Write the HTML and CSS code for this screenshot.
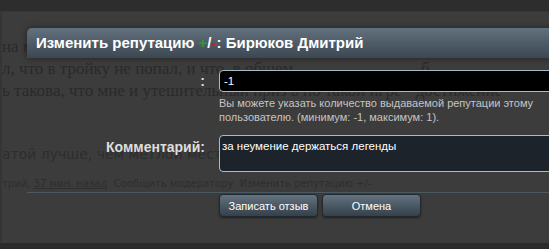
FILE: index.html
```html
<!DOCTYPE html>
<html lang="ru">
<head>
    <meta charset="UTF-8">
    <meta name="viewport" content="width=device-width, initial-scale=1.0">
    <title>Изменить репутацию</title>
    <link rel="stylesheet" href="styles.css">
</head>
<body>
    <div class="topbar"></div>
    <div class="thread">
        <p class="post-text first">на м</p>
        <p class="post-text">л, что в тройку не попал, и что, в общем, &nbsp;&nbsp;&nbsp;&nbsp;&nbsp;&nbsp;&nbsp;&nbsp;&nbsp;&nbsp;&nbsp;&nbsp;&nbsp;&nbsp;&nbsp;&nbsp;&nbsp;&nbsp;&nbsp;&nbsp;&nbsp;&nbsp;&nbsp;&nbsp;&nbsp;&nbsp;&nbsp;&nbsp;б</p>
        <p class="post-text">ь такова, что мне и утешительный приз в по такой игре - достижение</p>
        <p class="quote">атой лучше, чем метлой мести двор</p>
        <div class="post-meta">трий, <u>37 мин. назад</u> &nbsp;Сообщить модератору &nbsp;Изменить репутацию +/-</div>
        <div class="meta-line"></div>
    </div>
    <div class="bottombar"></div>

    <div class="overlay-dialog">
        <div class="dialog-title">Изменить репутацию <span class="plus">+</span>/<span class="minus">-</span>: Бирюков Дмитрий</div>
        <form class="dialog-body">
            <label class="field-label" for="repValue">:</label>
            <div class="field">
                <input id="repValue" class="rep-input" type="text" value="-1">
                <div class="hint">Вы можете указать количество выдаваемой репутации этому пользователю. (минимум: -1, максимум: 1).</div>
            </div>

            <label class="field-label comment-label" for="repComment">Комментарий:</label>
            <div class="field">
                <textarea id="repComment" class="rep-comment">за неумение держаться легенды</textarea>
            </div>

            <div></div>
            <div class="actions">
                <button type="button" class="dlg-btn save-btn">Записать отзыв</button>
                <button type="button" class="dlg-btn cancel-btn">Отмена</button>
            </div>
        </form>
    </div>
</body>
</html>
```

FILE: styles.css
```css
body {
    margin: 0;
    padding: 0;
    background-color: #3c3c3c;
    font-family: "Liberation Sans", Arial, sans-serif;
    height: 249px;
    overflow: hidden;
    position: relative;
}

.topbar {
    height: 11px;
    background-color: #2d2d2d;
    border-bottom: 1px solid #393838;
}

.thread {
    height: 231px;
    border-left: 2px solid #353535;
    overflow: hidden;
    white-space: nowrap;
}

.post-text {
    margin: 0;
    font-family: "Liberation Serif", serif;
    font-size: 17px;
    line-height: 22px;
    color: #2a2a2a;
}

.post-text.first {
    margin-top: 24px;
}

.quote {
    margin: 43px 0 0 0;
    font-family: "DejaVu Sans", sans-serif;
    font-size: 14px;
    line-height: 18px;
    color: #2d2d2d;
}

.post-meta {
    margin-top: 14px;
    font-family: "DejaVu Sans", sans-serif;
    font-size: 10px;
    color: #2e2e2e;
    line-height: 14px;
}

.meta-line {
    margin: 1px 0 0 25px;
    border-top: 1px solid #4b5962;
}

.bottombar {
    height: 6px;
    background-color: #2b2b2b;
}

/* диалог поверх страницы */
.overlay-dialog {
    position: absolute;
    top: 28px;
    left: 27px;
    right: -20px;
}

.dialog-title {
    height: 30px;
    line-height: 30px;
    padding-left: 9px;
    border-radius: 5px 0 0 0;
    background: linear-gradient(#62717e, #3c4751);
    box-shadow: 0 0 6px rgba(0, 0, 0, 0.45);
    color: #ffffff;
    font-size: 15px;
    font-weight: bold;
}

.plus {
    color: #2e9a2e;
}

.minus {
    color: #d02020;
}

.dialog-body {
    display: grid;
    grid-template-columns: 178px 1fr;
    column-gap: 14px;
    row-gap: 11px;
    padding-top: 12px;
}

.field-label {
    text-align: right;
    color: #dedede;
    font-size: 14px;
    font-weight: bold;
    padding-top: 3px;
}

.comment-label {
    padding-top: 4px;
}

.rep-input,
.rep-comment {
    display: block;
    width: 100%;
    box-sizing: border-box;
    border: 1px solid #a7bccb;
    border-radius: 4px;
    color: #ffffff;
    font-family: "Liberation Sans", Arial, sans-serif;
    font-size: 11.5px;
    margin: 0;
}

.rep-input {
    height: 22px;
    padding: 2px 4px;
    background-color: #000000;
}

.rep-comment {
    height: 37px;
    padding: 4px 2px;
    background-color: #1d232a;
    resize: none;
}

.hint {
    margin-top: 4px;
    font-size: 11px;
    line-height: 14px;
    color: #c4c4c4;
    padding-right: 20px;
}

.actions {
    display: flex;
    gap: 4px;
    margin-top: 11px;
}

.dlg-btn {
    width: 99px;
    height: 23px;
    padding: 0;
    border: 1px solid #23292e;
    border-radius: 4px;
    background: linear-gradient(#63737f, #34404a);
    box-shadow: 0 1px 2px rgba(0, 0, 0, 0.5);
    color: #ffffff;
    font-family: "Liberation Sans", Arial, sans-serif;
    font-size: 11px;
    cursor: pointer;
}
```
